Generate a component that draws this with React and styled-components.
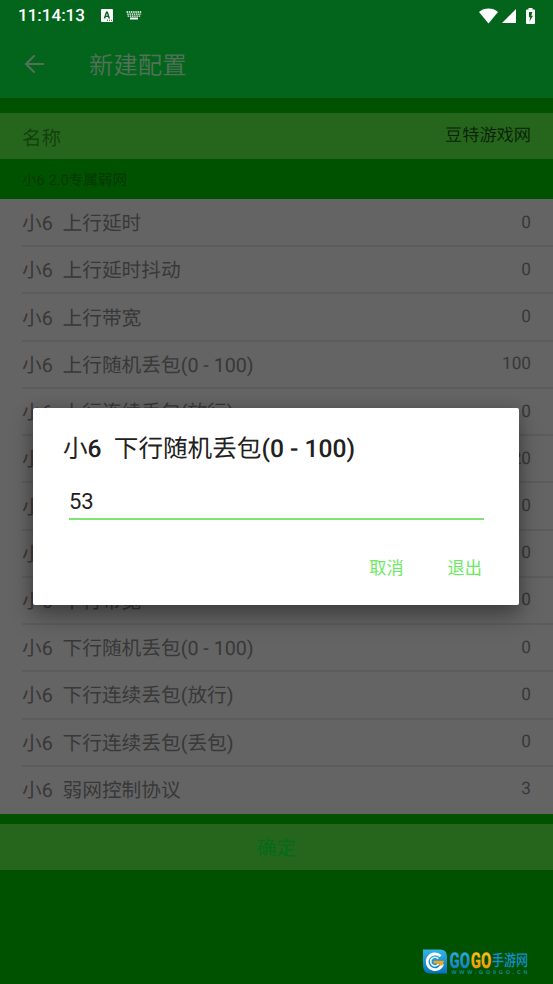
import styled, { createGlobalStyle } from 'styled-components'

const GlobalStyle = createGlobalStyle`
  * {
    box-sizing: border-box;
  }

  body {
    margin: 0;
    background: #005200;
    font-family: Roboto, "Noto Sans CJK SC", sans-serif;
    text-rendering: geometricPrecision;
  }
`

const Screen = styled.div`
  position: relative;
  height: 984px;
  overflow: hidden;
  background: #005200;
`

const Header = styled.header`
  height: 98px;
  background: #03651b;
`

const StatusBar = styled.div`
  display: flex;
  align-items: center;
  height: 31px;
  padding: 0 18px;
  color: #fff;

  svg {
    display: block;
    fill: currentColor;
  }
`

const Clock = styled.span`
  width: 83px;
  padding-top: 2px;
  font-size: 17px;
  font-weight: 500;
  line-height: 29px;
`

const StatusIcons = styled.div`
  display: flex;
  align-items: center;
  gap: ${props => props.$gap};
  margin-left: ${props => props.$right ? 'auto' : '0'};

  svg:nth-child(3) {
    margin-left: 6px;
  }
`

const Toolbar = styled.div`
  display: flex;
  align-items: center;
  height: 67px;
  padding-left: 24px;
  color: #53715a;

  svg {
    margin-right: 44px;
  }
`

const PageTitle = styled.h1`
  margin: 0;
  padding-top: 3px;
  font-size: 24.4px;
  font-weight: 350;
  line-height: 36px;
`

const NameRow = styled.div`
  display: flex;
  align-items: center;
  justify-content: space-between;
  height: 46px;
  margin-top: 15px;
  padding: 0 22px;
  background: #26661c;
`

const NameLabel = styled.span`
  font-size: 19.5px;
  font-weight: 350;
  color: #123f0d;
`

const NameValue = styled.span`
  font-size: 17.2px;
  font-weight: 350;
  line-height: 24px;
  color: #092007;
`

const SectionTitle = styled.div`
  height: 40px;
  padding: 1px 22px 0;
  font-size: 14.6px;
  line-height: 40px;
  color: #063806;
`

const List = styled.div`
  display: flex;
  flex-direction: column;
  height: 615px;
  padding-top: 1px;
  background: #646464;
`

const Row = styled.div`
  display: flex;
  flex: 1;
  align-items: center;
  justify-content: space-between;
  margin-left: 22px;
  padding-right: 22px;
  border-bottom: 2px solid #5c5c5c;
  color: #383838;

  &:last-child {
    border-bottom-color: transparent;
  }
`

const RowLabel = styled.span`
  padding-top: 3px;
  font-size: 19.7px;
  line-height: 28px;
  white-space: pre;
`

const RowValue = styled.span`
  font-size: 17.2px;
  line-height: 24px;
`

const ConfirmButton = styled.button`
  display: block;
  width: 100%;
  height: 46px;
  margin-top: 10px;
  padding: 0 0 2px;
  border: 0;
  background: #26661c;
  color: #036b1b;
  font-family: inherit;
  font-size: 19.5px;
`

const Overlay = styled.div`
  position: absolute;
  inset: 0;
  display: flex;
  align-items: flex-start;
  justify-content: center;
  padding: 408px 34px 0 33px;
`

const Dialog = styled.div`
  width: 100%;
  height: 197px;
  padding: 22px 30px 0;
  border-radius: 2px;
  background: #fff;
  box-shadow: 0 12px 24px rgba(0, 0, 0, .3), 0 2px 14px rgba(0, 0, 0, .2);
`

const DialogTitle = styled.h2`
  margin: 0;
  padding-top: 2px;
  font-size: 24.6px;
  font-weight: 500;
  line-height: 36px;
  color: #212121;
  white-space: pre;

  span {
    font-weight: 400;
  }
`

const Field = styled.input`
  display: block;
  width: 415px;
  height: 37px;
  margin: 15px 0 0 6px;
  padding: 2px 0 0;
  border: 0;
  border-bottom: 2px solid #7fe373;
  outline: 0;
  background: transparent;
  color: #212121;
  font-family: inherit;
  font-size: 22px;
`

const Actions = styled.div`
  display: flex;
  justify-content: flex-end;
  gap: 44px;
  margin-top: 35px;
  padding-right: 7px;
`

const Action = styled.button`
  padding: 0;
  border: 0;
  background: none;
  color: #6bea5f;
  font-family: inherit;
  font-size: 17.2px;
  line-height: 26px;
`

const Watermark = styled.div`
  position: absolute;
  left: 422px;
  top: 948px;
`

const rows = [
  ['上行延时', 0],
  ['上行延时抖动', 0],
  ['上行带宽', 0],
  ['上行随机丢包(0 - 100)', 100],
  ['上行连续丢包(放行)', 0],
  ['上行连续丢包(丢包)', 20],
  ['下行延时', 0],
  ['下行延时抖动', 0],
  ['下行带宽', 0],
  ['下行随机丢包(0 - 100)', 0],
  ['下行连续丢包(放行)', 0],
  ['下行连续丢包(丢包)', 0],
  ['弱网控制协议', 3],
]

function InputMethodIcon() {
  return (
    <svg width="12" height="13" viewBox="0 0 12 13">
      <path fillRule="evenodd" d="M1 0h10a1 1 0 0 1 1 1v11a1 1 0 0 1-1 1H1a1 1 0 0 1-1-1V1a1 1 0 0 1 1-1ZM5 2.6 2.7 9.4h1.6l.4-1.3h2.4l.4 1.3h1.6L6.8 2.6ZM5.1 6.8l.8-2.6.8 2.6ZM6 10.7v1h1v-1ZM8 10.7v1h1v-1ZM10 10.7v1h1v-1Z" />
    </svg>
  )
}

function KeyboardIcon() {
  return (
    <svg width="16" height="9" viewBox="0 0 16 9">
      <path d="M.5 1h15" stroke="#fff" strokeWidth="1.3" strokeDasharray="1.5 .7" />
      <path d="M1.2 3.1h14M1.6 5.1h13" stroke="#fff" strokeWidth="1.3" strokeDasharray="1.5 .7" />
      <path d="M4 6.5h8v2H4z" />
    </svg>
  )
}

function WifiIcon() {
  return (
    <svg width="19" height="16" viewBox="0 0 19 16">
      <path d="M9.5 15.6 0 4Q4 .6 9.5.6T19 4Z" />
    </svg>
  )
}

function SignalIcon() {
  return (
    <svg width="14" height="14" viewBox="0 0 14 14">
      <path d="M0 14 14 0v14Z" />
    </svg>
  )
}

function BatteryIcon() {
  return (
    <svg width="9" height="16" viewBox="0 0 9 16">
      <path fillRule="evenodd" d="M2.5 0h4v1.6H8a1 1 0 0 1 1 1V15a1 1 0 0 1-1 1H1a1 1 0 0 1-1-1V2.6a1 1 0 0 1 1-1h1.5ZM3 4v5.2h1.3L3.4 13.8 7 7.8H5.3L6.3 4Z" />
    </svg>
  )
}

function BackIcon() {
  return (
    <svg width="21" height="20" viewBox="0 0 21 20" fill="none" stroke="currentColor" strokeWidth="2">
      <path d="M20 9H2M10.7.2 2 9l8.7 8.8" />
    </svg>
  )
}

function SiteLogo() {
  return (
    <svg width="124" height="34" viewBox="0 0 124 34">
      <defs>
        <linearGradient id="blue" x1="0" y1="0" x2="0" y2="1">
          <stop offset="0" stopColor="#35b4e6" />
          <stop offset="1" stopColor="#0872bd" />
        </linearGradient>
        <linearGradient id="orange" x1="0" y1="0" x2="0" y2="1">
          <stop offset="0" stopColor="#ffc51b" />
          <stop offset="1" stopColor="#f28a0b" />
        </linearGradient>
      </defs>
      <path d="M1 1.5h17q7 0 7 7v17H9q-8 0-8-8Z" fill="url(#blue)" />
      <path d="M18.6 8.3A7.8 7.8 0 1 0 20.5 16" fill="none" stroke="#fff" strokeWidth="2.8" />
      <path d="M16.2 10.7a4.3 4.3 0 1 0 .5 5" fill="none" stroke="#e4f4fb" strokeWidth="1.7" />
      <path d="M11.5 12.8H22l-1.5 4.8h-3.2v-2.2h-5.8Z" fill="#f6a51c" />
      <g fontFamily="Roboto, sans-serif" fontWeight="900" fontSize="22">
        <text x="27.5" y="19.5" textLength="20.5" lengthAdjust="spacingAndGlyphs" fill="url(#blue)">GO</text>
        <text x="48.8" y="19.5" textLength="20.5" lengthAdjust="spacingAndGlyphs" fill="url(#orange)">GO</text>
      </g>
      <text x="70" y="18.3" fontFamily="Noto Sans CJK SC, sans-serif" fontWeight="500" fontSize="16" textLength="36" lengthAdjust="spacingAndGlyphs" fill="#168dce">手游网</text>
      <text x="29.5" y="26" fontFamily="Liberation Sans, sans-serif" fontWeight="700" fontSize="5.4" textLength="76" fill="#148a96">WWW.GO9GO.CN</text>
    </svg>
  )
}

export default function App() {
  return (
    <Screen>
      <GlobalStyle />
      <Header>
        <StatusBar>
          <Clock>11:14:13</Clock>
          <StatusIcons $gap="13px">
            <InputMethodIcon />
            <KeyboardIcon />
          </StatusIcons>
          <StatusIcons $right $gap="4px">
            <WifiIcon />
            <SignalIcon />
            <BatteryIcon />
          </StatusIcons>
        </StatusBar>
        <Toolbar>
          <BackIcon />
          <PageTitle>新建配置</PageTitle>
        </Toolbar>
      </Header>

      <NameRow>
        <NameLabel>名称</NameLabel>
        <NameValue>豆特游戏网</NameValue>
      </NameRow>
      <SectionTitle>小6 2.0专属弱网</SectionTitle>

      <List>
        {rows.map(([label, value]) => (
          <Row key={label}>
            <RowLabel>{`小6  ${label}`}</RowLabel>
            <RowValue>{value}</RowValue>
          </Row>
        ))}
      </List>
      <ConfirmButton>确定</ConfirmButton>

      <Overlay>
        <Dialog>
          <DialogTitle><span>小</span>6{'  '}<span>下行随机丢包</span>(0 - 100)</DialogTitle>
          <Field defaultValue="53" />
          <Actions>
            <Action>取消</Action>
            <Action>退出</Action>
          </Actions>
        </Dialog>
      </Overlay>

      <Watermark>
        <SiteLogo />
      </Watermark>
    </Screen>
  )
}
